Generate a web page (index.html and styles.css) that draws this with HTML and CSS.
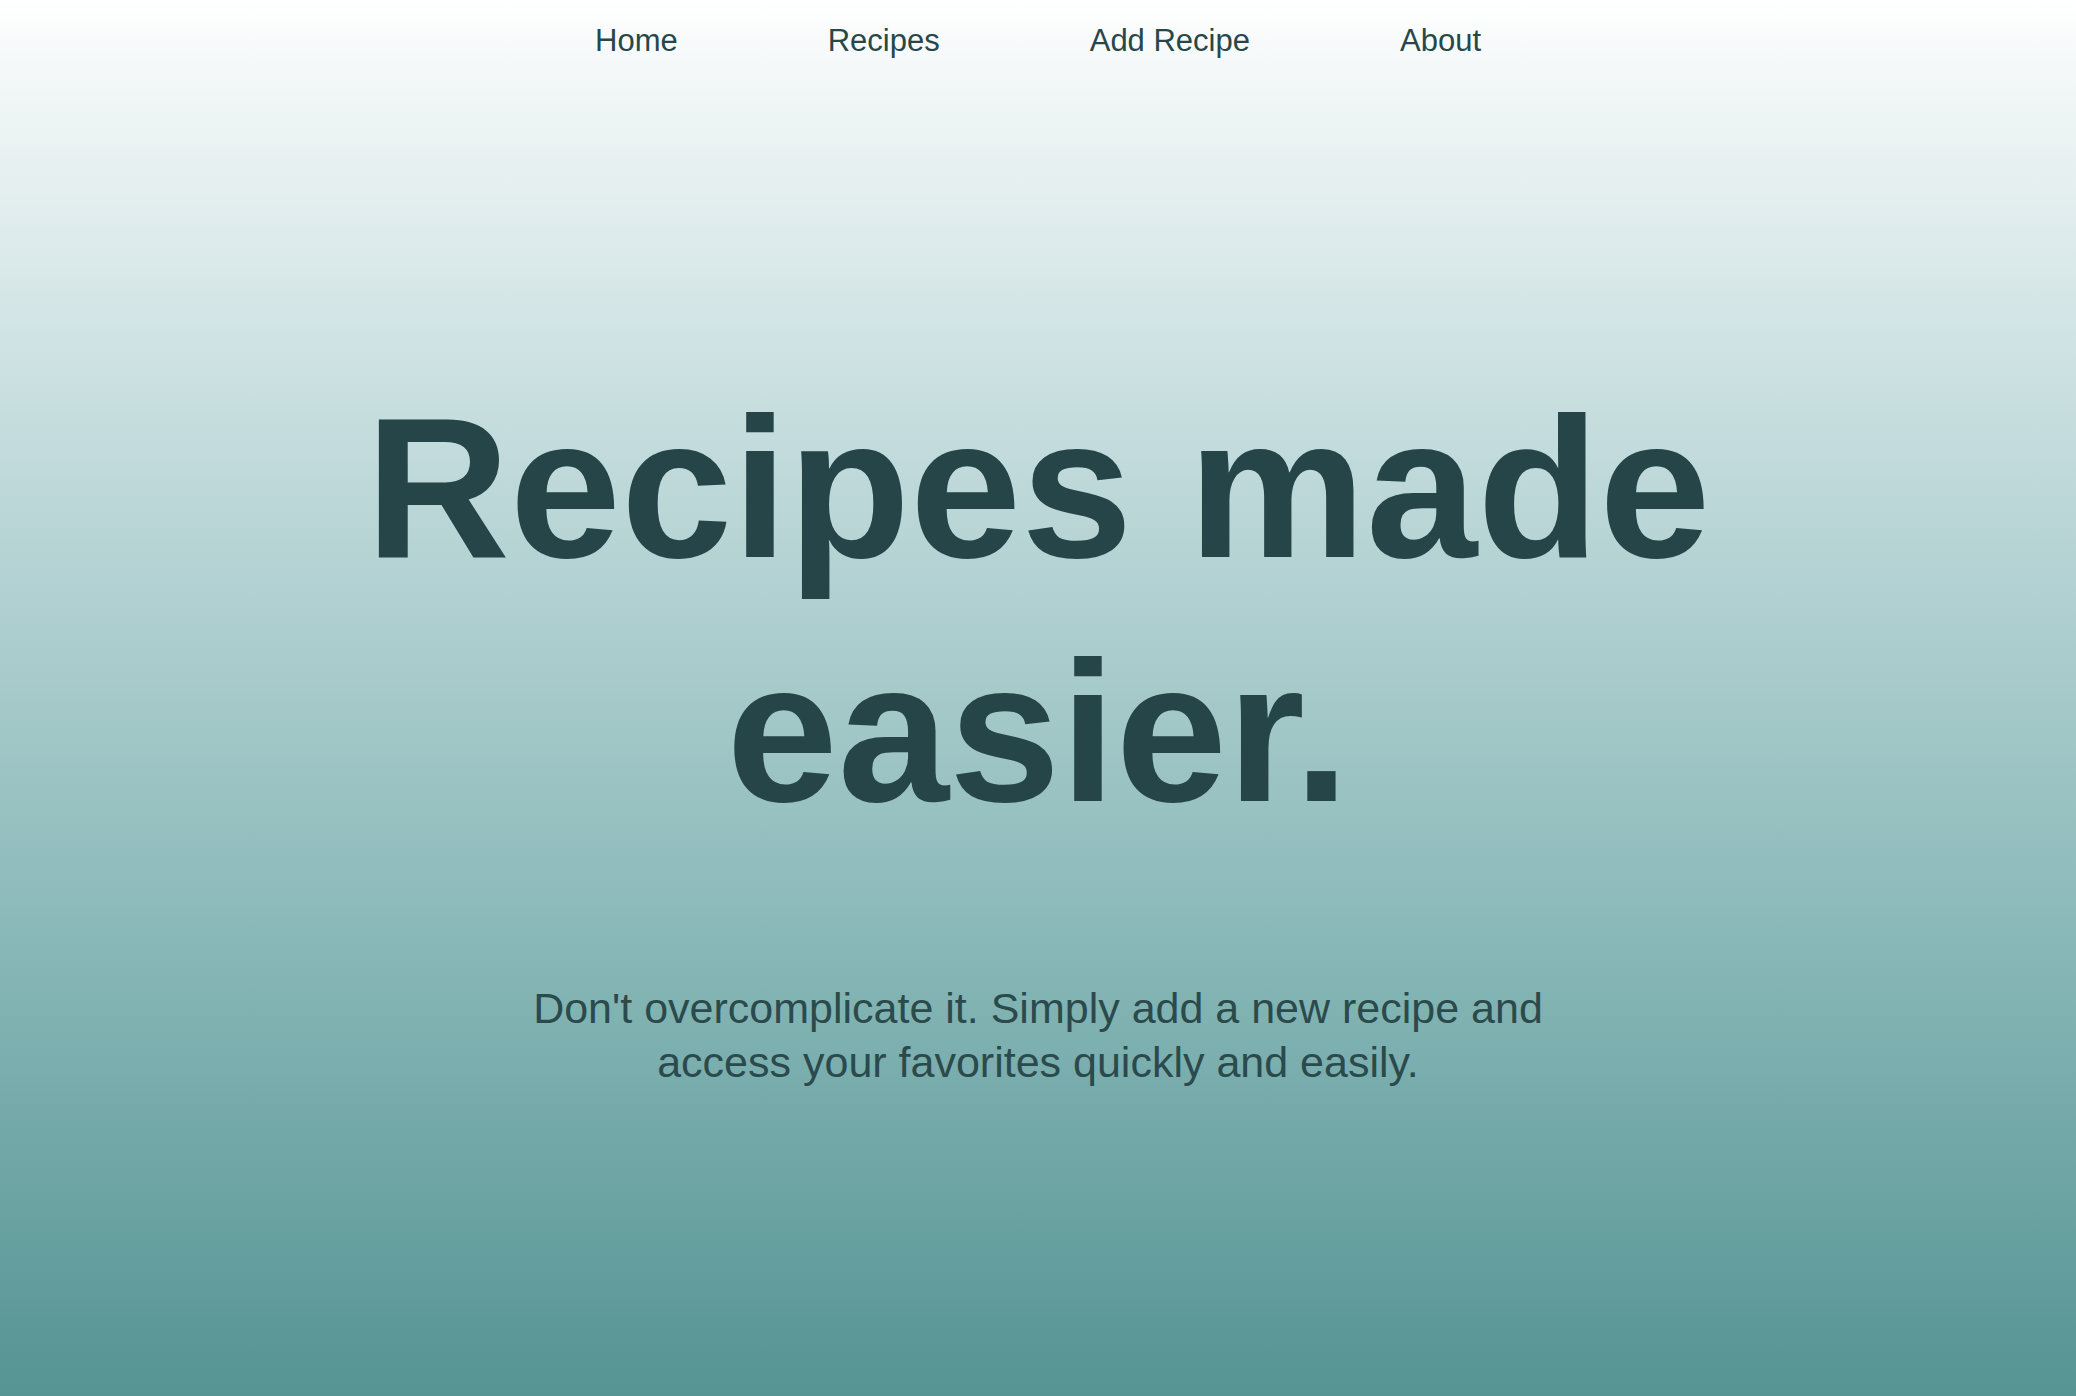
FILE: index.html
```html
<!DOCTYPE html>
<html lang="en">
<head>
<meta charset="utf-8">
<title>Recipes made easier.</title>
<link rel="stylesheet" href="styles.css">
</head>
<body>
<nav class="nav">
  <a class="nav-link" href="#">Home</a>
  <a class="nav-link" href="#">Recipes</a>
  <a class="nav-link" href="#">Add Recipe</a>
  <a class="nav-link" href="#">About</a>
</nav>
<main class="hero">
  <h1 class="hero-title">Recipes made easier.</h1>
  <p class="hero-text">Don't overcomplicate it. Simply add a new recipe and access your favorites quickly and easily.</p>
</main>
</body>
</html>
```

FILE: styles.css
```css
html, body {
  margin: 0;
  padding: 0;
}

body {
  min-height: 1396px;
  font-family: "Liberation Sans", Arial, Helvetica, sans-serif;
  color: #264548;
  background: linear-gradient(to bottom, #ffffff 0%, #f4f8f8 5%, #c9dfe0 28%, #83b4b4 71%, #569393 100%);
}

.nav {
  display: flex;
  justify-content: center;
  gap: 150px;
  padding-top: 23px;
  font-size: 31px;
  line-height: 36px;
}

.nav-link {
  color: #284749;
  text-decoration: none;
}

.hero {
  display: flex;
  flex-direction: column;
  align-items: center;
  text-align: center;
  padding-top: 307px;
}

.hero-title {
  margin: 0;
  max-width: 1500px;
  font-size: 200px;
  line-height: 244px;
  font-weight: 700;
  color: #264548;
}

.hero-text {
  margin: 127px 0 0;
  max-width: 1070px;
  font-size: 43px;
  line-height: 54px;
  color: #2b4a4c;
}
```
